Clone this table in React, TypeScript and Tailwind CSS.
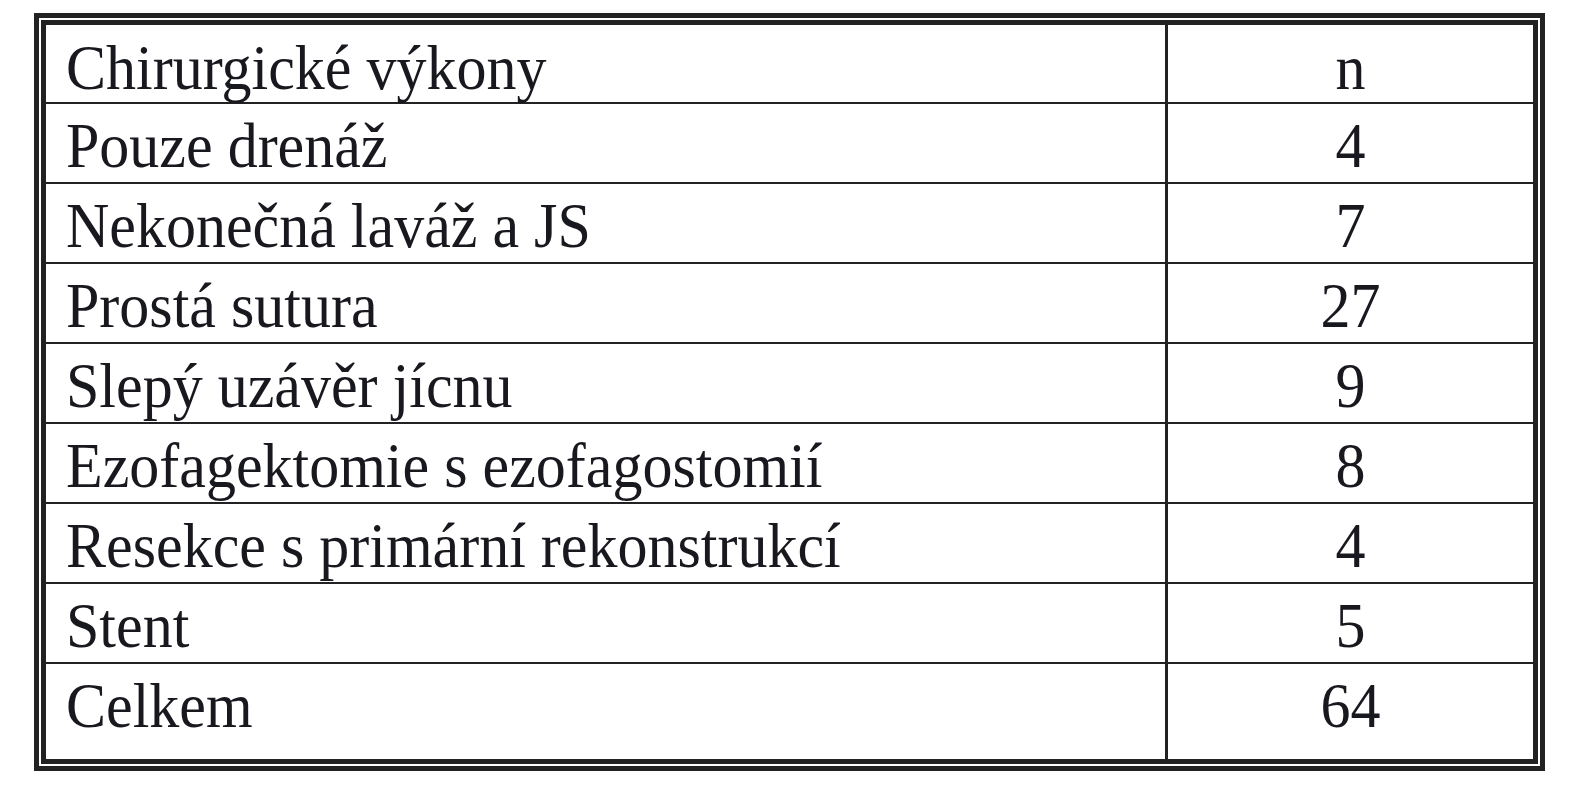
import React from 'react';

const rows: { label: string; n: string }[] = [
  { label: 'Pouze drenáž', n: '4' },
  { label: 'Nekonečná laváž a JS', n: '7' },
  { label: 'Prostá sutura', n: '27' },
  { label: 'Slepý uzávěr jícnu', n: '9' },
  { label: 'Ezofagektomie s ezofagostomií', n: '8' },
  { label: 'Resekce s primární rekonstrukcí', n: '4' },
  { label: 'Stent', n: '5' },
];

const Row: React.FC<{ label: string; n: string; last?: boolean; first?: boolean }> = ({ label, n, last, first }) => (
  <div
    className={`flex ${last ? 'h-[95px]' : first ? 'h-[79px] border-b-2' : 'h-[80px] border-b-2'} border-[#222]`}
  >
    <div className="w-[1122px] border-r-[3px] border-[#222] pl-[20px] pt-[14px] leading-none">
      <span className="inline-block origin-bottom scale-y-[1.05]">{label}</span>
    </div>
    <div className="flex-1 text-center pt-[14px] leading-none">
      <span className="inline-block origin-bottom scale-y-[1.05]">{n}</span>
    </div>
  </div>
);

export default function App() {
  return (
    <div className="bg-white w-[1577px] h-[800px] pt-[13px] pl-[34px]">
      <div
        className="w-[1511px] border-[5px] border-[#222] p-[2px] text-[#18181f] text-[60px]"
        style={{ fontFamily: '"Liberation Serif", "Times New Roman", serif' }}
      >
        <div className="border-[5px] border-[#222]">
          <Row label="Chirurgické výkony" n="n" first />
          {rows.map((r) => (
            <Row key={r.label} label={r.label} n={r.n} />
          ))}
          <Row label="Celkem" n="64" last />
        </div>
      </div>
    </div>
  );
}
